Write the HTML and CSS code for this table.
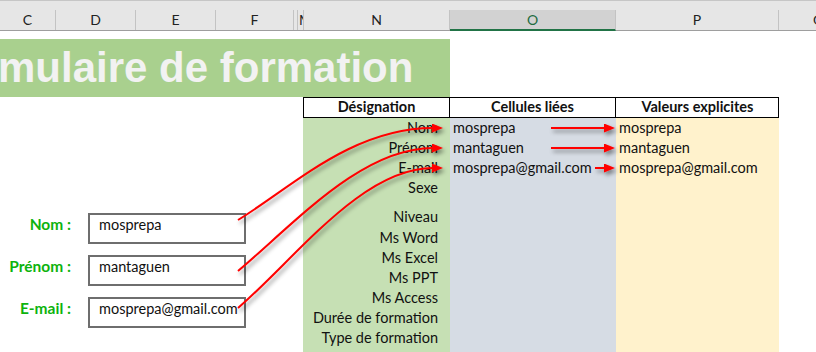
FILE: index.html
```html
<!DOCTYPE html>
<html lang="fr">
<head>
<meta charset="utf-8">
<title>Formulaire de formation</title>
<link rel="stylesheet" href="styles.css">
</head>
<body>
<div class="sheet">
  <div class="topbar"></div>
  <div class="colheads">
    <div class="ch w-c">C</div>
    <div class="ch w-d">D</div>
    <div class="ch w-e">E</div>
    <div class="ch w-f">F</div>
    <div class="ch w-l"></div>
    <div class="ch w-m">M</div>
    <div class="ch w-n">N</div>
    <div class="ch w-o selected">O</div>
    <div class="ch w-p">P</div>
    <div class="ch w-q">Q</div>
  </div>
  <div class="titleband"><h1 class="title">mulaire de formation</h1></div>
  <div class="main">
    <div class="form">
      <div class="frow"><span class="flabel">Nom :</span><div class="fbox">mosprepa</div></div>
      <div class="frow"><span class="flabel">Prénom :</span><div class="fbox">mantaguen</div></div>
      <div class="frow"><span class="flabel">E-mail :</span><div class="fbox">mosprepa@gmail.com</div></div>
    </div>
    <div class="table">
      <div class="thead">
        <div class="th">Désignation</div>
        <div class="th">Cellules liées</div>
        <div class="th">Valeurs explicites</div>
      </div>
      <div class="tbody">
        <div class="td des">Nom</div><div class="td lie">mosprepa</div><div class="td val">mosprepa</div>
        <div class="td des">Prénom</div><div class="td lie">mantaguen</div><div class="td val">mantaguen</div>
        <div class="td des">E-mail</div><div class="td lie">mosprepa@gmail.com</div><div class="td val">mosprepa@gmail.com</div>
        <div class="td des">Sexe</div><div class="td lie"></div><div class="td val"></div>
        <div class="td des tall">Niveau</div><div class="td lie"></div><div class="td val"></div>
        <div class="td des">Ms Word</div><div class="td lie"></div><div class="td val"></div>
        <div class="td des">Ms Excel</div><div class="td lie"></div><div class="td val"></div>
        <div class="td des">Ms PPT</div><div class="td lie"></div><div class="td val"></div>
        <div class="td des">Ms Access</div><div class="td lie"></div><div class="td val"></div>
        <div class="td des">Durée de formation</div><div class="td lie"></div><div class="td val"></div>
        <div class="td des">Type de formation</div><div class="td lie"></div><div class="td val"></div>
        <div class="td des"></div><div class="td lie"></div><div class="td val"></div>
      </div>
    </div>
  </div>
  <svg class="arrows" width="816" height="352" viewBox="0 0 816 352" aria-hidden="true">
    <defs>
      <filter id="sh" x="-10%" y="-20%" width="130%" height="160%">
        <feDropShadow dx="2" dy="3" stdDeviation="2" flood-color="#000" flood-opacity="0.45"/>
      </filter>
      <marker id="ah" markerUnits="userSpaceOnUse" markerWidth="11" markerHeight="9" refX="1" refY="4.5" orient="auto">
        <path d="M0,0 L11,4.5 L0,9 z" fill="#ff0000"/>
      </marker>
    </defs>
    <g filter="url(#sh)" fill="none" stroke="#ff0000" stroke-width="2">
      <path d="M238,220 C292,187 352,128 433,128" marker-end="url(#ah)"/>
      <path d="M238,271 C296,222 362,148 433,148" marker-end="url(#ah)"/>
      <path d="M238,308 C296,258 362,168 433,168" marker-end="url(#ah)"/>
      <path d="M551,128 L605,128" marker-end="url(#ah)"/>
      <path d="M551,148 L605,148" marker-end="url(#ah)"/>
      <path d="M595,168 L605,168" marker-end="url(#ah)"/>
    </g>
  </svg>
</div>
</body>
</html>
```
FILE: styles.css
```css
* { box-sizing: border-box; }
html, body { margin: 0; padding: 0; background: #fff; }
body { width: 816px; height: 352px; overflow: hidden; font-family: Lato, "Open Sans", sans-serif; font-size: 14.5px; color: #111; }
.sheet { position: relative; width: 816px; height: 352px; overflow: hidden; }

.topbar { height: 10px; background: #e6e6e6; border-top: 1px solid #c6c6c6; }
.colheads { display: flex; height: 21px; background: #e6e6e6; border-bottom: 1px solid #9e9e9e; width: 900px; font-size: 14px; }
.ch { flex: none; height: 20px; line-height: 20px; text-align: center; border-right: 1px solid #c3c3c3; color: #222; overflow: hidden; white-space: nowrap; }
.w-c { width: 56px; }
.w-d { width: 80px; }
.w-e { width: 80px; }
.w-f { width: 78px; }
.w-l { width: 4px; }
.w-m { width: 6px; text-align: left; padding-left: 1px; }
.w-n { width: 146px; }
.w-o { width: 166px; }
.w-p { width: 163px; }
.w-q { width: 80px; }
.selected { background: #d2d2d2; color: #1e6b40; border-bottom: 2px solid #217346; height: 21px; line-height: 20px; }

.titleband { margin-top: 8px; width: 450px; height: 58px; background: #a9d08e; overflow: hidden; }
.title { margin: 0 0 0 -2px; font-family: "Liberation Sans", Arial, sans-serif; font-weight: bold; font-size: 42px; line-height: 58px; color: #f2f2f2; white-space: nowrap; }

.main { display: flex; }
.form { width: 303px; flex: none; padding-top: 116px; display: flex; flex-direction: column; gap: 11px; }
.frow { display: flex; align-items: flex-start; }
.flabel { width: 71px; text-align: right; padding-top: 3px; line-height: 16px; font-size: 15.5px; font-weight: bold; color: #0db30d; white-space: nowrap; }
.fbox { margin-left: 17px; width: 158px; height: 31px; border: 2px solid #6e6e6e; padding-left: 9px; padding-top: 2px; line-height: 16px; white-space: nowrap; }

.table { flex: none; width: 476px; }
.thead { display: grid; grid-template-columns: 146px 166px 163px; border: 1px solid #000; height: 21px; }
.th { height: 19px; line-height: 17px; text-align: center; font-weight: bold; border-right: 1px solid #000; white-space: nowrap; }
.th:last-child { border-right: none; }
.tbody { display: grid; grid-template-columns: 147px 166px 163px; grid-template-rows: 20px 20px 20px 20px 30px; grid-auto-rows: 20px; }
.td { line-height: 17px; padding-top: 1px; white-space: nowrap; }
.des { background: #c6e0b4; text-align: right; padding-right: 12px; }
.lie { background: #d6dce4; padding-left: 3px; }
.val { background: #fff2cc; padding-left: 3px; }
.des.tall { padding-top: 10px; }

.arrows { position: absolute; left: 0; top: 0; pointer-events: none; }
```
